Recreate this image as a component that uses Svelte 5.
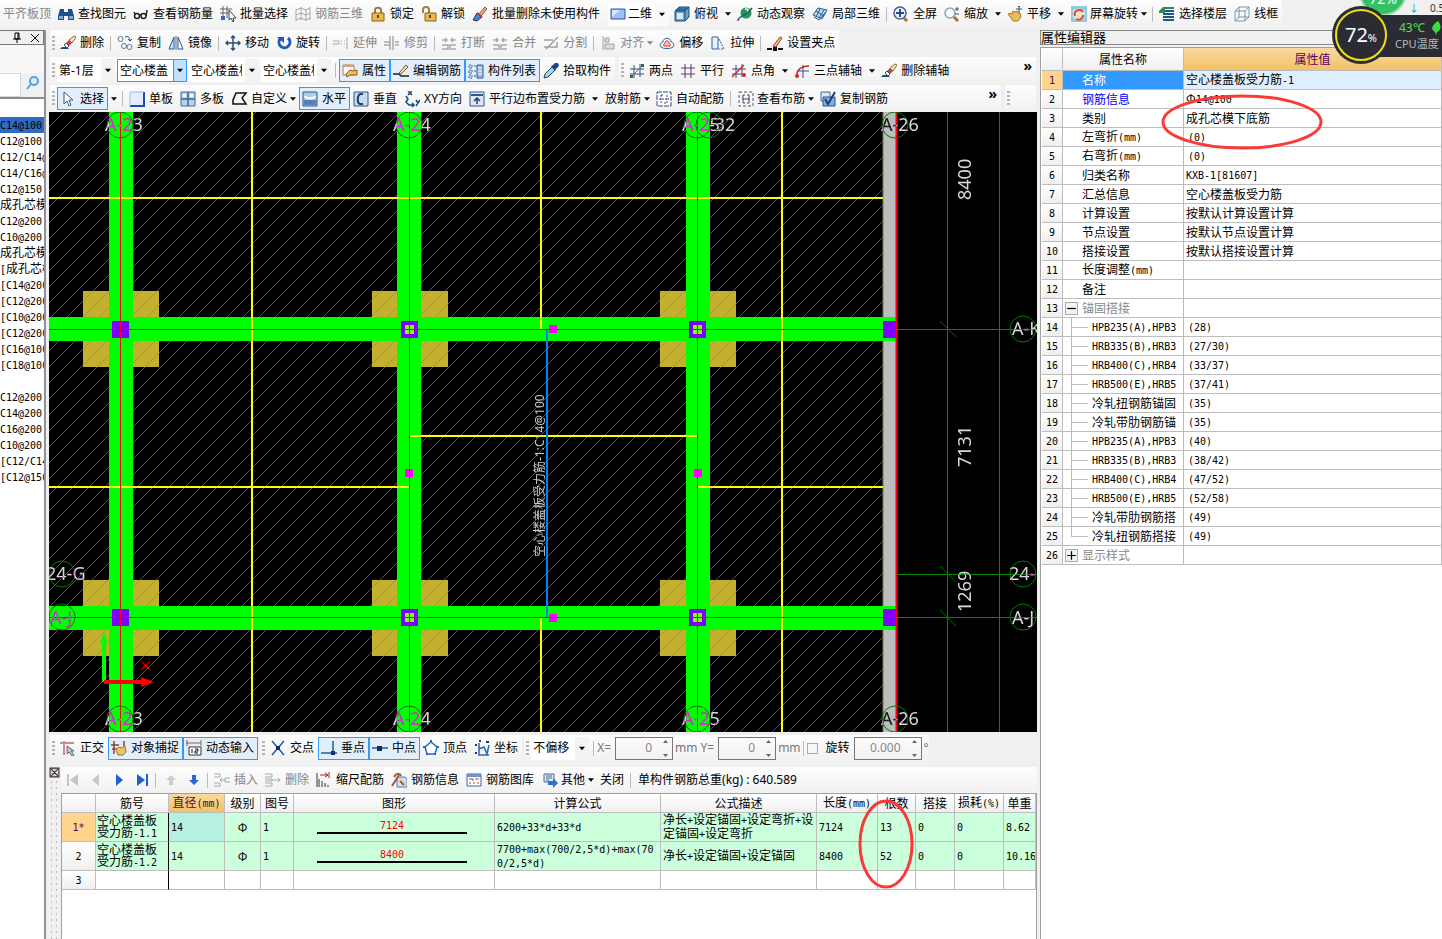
<script lang="ts">
	type Item = {
		icon?: string;
		text?: string;
		on?: boolean;
		off?: boolean;
		drop?: 'split' | 'menu';
		sep?: boolean;
		label?: string;
	};

	const SEP: Item = { sep: true };

	const editBar: Item[] = [
		{ icon: 'eraser', text: '删除' },
		SEP,
		{ icon: 'copy', text: '复制' },
		{ icon: 'mirror', text: '镜像' },
		SEP,
		{ icon: 'move', text: '移动' },
		{ icon: 'rotate', text: '旋转' },
		SEP,
		{ icon: 'extend', text: '延伸', off: true },
		{ icon: 'trim', text: '修剪', off: true },
		SEP,
		{ icon: 'break', text: '打断', off: true },
		{ icon: 'break', text: '合并', off: true },
		{ icon: 'split', text: '分割', off: true },
		SEP,
		{ icon: 'align', text: '对齐', off: true, drop: 'menu' },
		{ icon: 'offset', text: '偏移' },
		{ icon: 'stretch', text: '拉伸' },
		SEP,
		{ icon: 'grip', text: '设置夹点' }
	];

	const topLeft: Item[] = [
		{ text: '平齐板顶', off: true },
		{ icon: 'find', text: '查找图元' },
		{ icon: 'glasses', text: '查看钢筋量' },
		{ icon: 'batch', text: '批量选择' },
		{ icon: 'mesh', text: '钢筋三维', off: true },
		{ icon: 'lock', text: '锁定' },
		{ icon: 'unlock', text: '解锁' },
		{ icon: 'brush', text: '批量删除未使用构件' }
	];

	const topRight: Item[] = [
		{ icon: 'cube', text: '俯视', drop: 'split' },
		{ icon: 'orbit', text: '动态观察' },
		{ icon: 'local3d', text: '局部三维' },
		SEP,
		{ icon: 'full', text: '全屏' },
		{ icon: 'zoom', text: '缩放', drop: 'split' },
		{ icon: 'hand', text: '平移', drop: 'split' },
		{ icon: 'screen', text: '屏幕旋转', drop: 'menu' },
		SEP,
		{ icon: 'floors', text: '选择楼层' },
		{ icon: 'wire', text: '线框' }
	];

	const combos = [
		{ label: '楼层', value: '第-1层', kind: 'floor' },
		{ label: '构件类别', value: '空心楼盖', kind: 'active' },
		{ label: '构件类型', value: '空心楼盖板', kind: '' },
		{ label: '构件名称', value: '空心楼盖板', kind: '' }
	];

	const memberBar: Item[] = [
		SEP,
		{ icon: 'props', text: '属性', on: true },
		{ icon: 'pencil', text: '编辑钢筋', on: true },
		{ icon: 'list', text: '构件列表', on: true },
		{ icon: 'dropper', text: '拾取构件' }
	];

	const axisBar: Item[] = [
		{ icon: 'twopt', text: '两点' },
		{ icon: 'parallel', text: '平行' },
		{ icon: 'angle', text: '点角', drop: 'split' },
		{ icon: 'threept', text: '三点辅轴', drop: 'split' },
		{ icon: 'eraser', text: '删除辅轴' }
	];

	const drawBar: Item[] = [
		{ icon: 'cursor', text: '选择', on: true, drop: 'split' },
		SEP,
		{ icon: 'single', text: '单板' },
		{ icon: 'multi', text: '多板' },
		{ icon: 'custom', text: '自定义', drop: 'menu' },
		{ icon: 'horiz', text: '水平', on: true },
		{ icon: 'vert', text: '垂直' },
		{ icon: 'xy', text: 'XY方向' },
		{ icon: 'edge', text: '平行边布置受力筋', drop: 'split' },
		{ text: '放射筋', drop: 'menu' },
		{ icon: 'auto', text: '自动配筋' },
		SEP,
		{ icon: 'viewbar', text: '查看布筋', drop: 'menu' },
		{ icon: 'copybar', text: '复制钢筋' }
	];

	const snapLeft: Item[] = [
		{ icon: 'ortho', text: '正交' },
		{ icon: 'snap', text: '对象捕捉', on: true },
		{ icon: 'dyn', text: '动态输入', on: true }
	];

	const snapRight: Item[] = [
		{ icon: 'cross', text: '交点' },
		{ icon: 'perp', text: '垂点', on: true },
		{ icon: 'mid', text: '中点', on: true },
		{ icon: 'penta', text: '顶点' },
		{ icon: 'coord', text: '坐标' }
	];

	const rebarBar: Item[] = [
		{ icon: 'first', label: '首条', off: true },
		{ icon: 'prev', label: '上一条', off: true },
		{ icon: 'next', label: '下一条' },
		{ icon: 'last', label: '末条' },
		SEP,
		{ icon: 'up', label: '上移', off: true },
		{ icon: 'down', label: '下移' },
		SEP,
		{ icon: 'insert', text: '插入', off: true },
		{ icon: 'remove', text: '删除', off: true },
		{ icon: 'scale', text: '缩尺配筋' },
		{ icon: 'info', text: '钢筋信息' },
		{ icon: 'library', text: '钢筋图库' },
		{ icon: 'other', text: '其他', drop: 'menu' },
		{ text: '关闭' },
		SEP
	];

	const members = [
		'C14@100', 'C12@100', 'C12/C14@', 'C14/C16@', 'C12@150', '成孔芯模', 'C12@200', 'C10@200', '成孔芯模',
		'[成孔芯模', '[C14@200', '[C12@200', '[C10@200', '[C12@200', '[C16@100', '[C18@100', '', 'C12@200]',
		'C14@200]', 'C16@200]', 'C10@200]', '[C12/C14', '[C12@150'
	];

	const props: { name: string; value?: string; kind?: string }[] = [
		{ name: '名称', value: '空心楼盖板受力筋-1', kind: 'selected' },
		{ name: '钢筋信息', value: 'Φ14@100', kind: 'blue' },
		{ name: '类别', value: '成孔芯模下底筋' },
		{ name: '左弯折(mm)', value: '(0)' },
		{ name: '右弯折(mm)', value: '(0)' },
		{ name: '归类名称', value: 'KXB-1[81607]' },
		{ name: '汇总信息', value: '空心楼盖板受力筋' },
		{ name: '计算设置', value: '按默认计算设置计算' },
		{ name: '节点设置', value: '按默认节点设置计算' },
		{ name: '搭接设置', value: '按默认搭接设置计算' },
		{ name: '长度调整(mm)' },
		{ name: '备注' },
		{ name: '锚固搭接', kind: 'open' },
		{ name: 'HPB235(A),HPB3', value: '(28)', kind: 'leaf' },
		{ name: 'HRB335(B),HRB3', value: '(27/30)', kind: 'leaf' },
		{ name: 'HRB400(C),HRB4', value: '(33/37)', kind: 'leaf' },
		{ name: 'HRB500(E),HRB5', value: '(37/41)', kind: 'leaf' },
		{ name: '冷轧扭钢筋锚固', value: '(35)', kind: 'leaf' },
		{ name: '冷轧带肋钢筋锚', value: '(35)', kind: 'leaf' },
		{ name: 'HPB235(A),HPB3', value: '(40)', kind: 'leaf' },
		{ name: 'HRB335(B),HRB3', value: '(38/42)', kind: 'leaf' },
		{ name: 'HRB400(C),HRB4', value: '(47/52)', kind: 'leaf' },
		{ name: 'HRB500(E),HRB5', value: '(52/58)', kind: 'leaf' },
		{ name: '冷轧带肋钢筋搭', value: '(49)', kind: 'leaf' },
		{ name: '冷轧扭钢筋搭接', value: '(49)', kind: 'leaf last' },
		{ name: '显示样式', kind: 'closed' }
	];

	const rebarCols = ['筋号', '直径(mm)', '级别', '图号', '图形', '计算公式', '公式描述', '长度(mm)', '根数', '搭接', '损耗(%)', '单重'];

	const rebars = [
		{
			no: '1*', name: '空心楼盖板受力筋-1.1', shape: '7124', formula: '6200+33*d+33*d',
			desc: '净长+设定锚固+设定弯折+设定锚固+设定弯折', count: '13', weight: '8.62'
		},
		{
			no: '2', name: '空心楼盖板受力筋-1.2', shape: '8400', formula: '7700+max(700/2,5*d)+max(700/2,5*d)',
			desc: '净长+设定锚固+设定锚固', count: '52', weight: '10.16'
		}
	];

	// drawing geometry
	const capsX = [83, 372, 660];
	const capsY = [291, 580];
	const beamsX = [109, 397, 686];
	const beamsY = [317, 606];
	const bubbles = [
		[120, 125], [120, 719], [409, 125], [409, 719], [697, 125], [697, 719], [709, 125], [895, 125], [895, 719],
		[62, 574], [62, 617], [1023, 329], [1023, 574], [1023, 617]
	];
	const labels: [number, number, string][] = [
		[105, 131, 'A-23'], [105, 725, 'A-23'], [393, 131, 'A-24'], [393, 725, 'A-24'], [682, 131, 'A-25'],
		[709, 131, '-32'], [682, 725, 'A-25'], [881, 131, 'A-26'], [881, 725, 'A-26'], [46, 580, '24-G'],
		[50, 624, 'A-J'], [1012, 335, 'A-K'], [1009, 580, '24-H'], [1012, 624, 'A-J']
	];
	const dims: [number, string][] = [[200, '8400'], [467, '7131'], [612, '1269']];
	const grips = [[553, 329], [553, 618], [409, 473], [698, 473]];

	const icons: Record<string, string> = {
		eraser: '<path d="M0 14h9l-2-2H2z" fill="#1c4a7c"/><path d="M5 9l4-4 3 3-4 4z" fill="#c8413a"/><path d="M9 5l5-4 2 1-4 6z" fill="#f2e6c8" stroke="#8a6a30"/><path d="M4 10l2-2 3 3-2 2z" fill="#fff" stroke="#356"/>',
		copy: '<g fill="none" stroke="#5a7894"><circle cx="3.500" cy="4" r="2.500"/><circle cx="7" cy="11" r="2.500"/><circle cx="12.500" cy="12" r="2.500"/><path d="M8 2c3-1 5 0 5 4m-2-2 2 2 2-2" stroke="#234b9a"/></g>',
		mirror: '<path d="M6 2v12H1z" fill="#cfe0f4" stroke="#2b5797"/><path d="M8 1v14" stroke="#567"/><path d="M10 2v12h5z" fill="#fff" stroke="#2b5797"/>',
		move: '<path d="M8 1v14M1 8h14M6 3l2-2 2 2M6 13l2 2 2-2M3 6 1 8l2 2M13 6l2 2-2 2" fill="none" stroke="#2b4f77" stroke-width="1.500"/>',
		rotate: '<path d="M4 4a5.500 5.500 0 1 0 8-1" fill="none" stroke="#2456b8" stroke-width="3"/><path d="M1 2h7v6z" fill="#2456b8"/>',
		extend: '<path d="M0 6h6v3H0M8 6h1m-1 3h1m2-3h1m-1 3h1M14 2v12" fill="none" stroke="#a8a8a8"/>',
		trim: '<path d="M6 1v14M9 1v14M0 7h6M0 10h6M11 7h4M11 10h4" fill="none" stroke="#a8a8a8" stroke-width="1.500"/>',
		break: '<path d="M1 10h6v4H1M15 10H9v4h6M1 5h5M4 3l2 2-2 2M15 5h-5m2-2-2 2 2 2" fill="none" stroke="#aaa" stroke-width="1.500"/>',
		split: '<path d="M1 5h9M1 12h13V7M3 14 15 2" fill="none" stroke="#a0a0a0" stroke-width="1.500"/>',
		align: '<path d="M2 1v14M4 3h4v4H4zM4 9h9v5H4z" fill="#ddd" stroke="#a0a0a0"/>',
		offset: '<path d="M2 12c-2-2 0-5 2-5 0-5 8-5 8 0 2 0 4 3 2 5-2 2-10 2-12 0z" fill="none" stroke="#2d5f94"/><path d="M5 11c-1-1 0-2 1-3 0-3 4-3 4 0 1 1 2 2 1 3z" fill="#fbb" stroke="#d33"/>',
		stretch: '<path d="M2 2h6v12H2z" fill="#eaf3fb" stroke="#2b5f9b"/><path d="M9 4l5 10H9" fill="none" stroke="#2b5f9b" stroke-dasharray="2 1"/>',
		grip: '<path d="M0 14h5M11 14h5" stroke="#111" stroke-width="2"/><path d="M6 12h4v4H6z" fill="#111"/><path d="M6 11 13 2l2 1-6 9z" fill="#e9c46a" stroke="#a33"/>',
		find: '<path d="M2 3h4v3h4V3h4l2 7v4h-6v-4H6v4H0v-4z" fill="#1f4e8c"/><path d="M1 10h4v3H1zM11 10h4v3h-4z" fill="#7fa8dc"/>',
		glasses: '<g fill="none" stroke="#222" stroke-width="1.500"><circle cx="4" cy="10" r="2.500"/><circle cx="10.500" cy="10" r="2.500"/><path d="M13 10l1-6M6 9h2M2 8l-1-2"/></g>',
		batch: '<path d="M3 0v12M7 0v12M0 3h12M0 7h12" stroke="#666"/><path d="M1 10h4v4H1z" fill="#36b"/><path d="M9 4v10l2-2 2 4 1-1-1-3h3z" fill="#fff" stroke="#345"/>',
		mesh: '<path d="M1 3v12M6 1v13M11 3v12M15 1v13M1 4l5-2 5 2 4-2M1 9l5-2 5 2 4-2M1 14l5-2 5 2 4-2" fill="none" stroke="#a8a8a8"/>',
		lock: '<path d="M5 7V4c0-3 6-3 6 0v3" fill="none" stroke="#998040" stroke-width="2"/><path d="M2 7h12v8H2z" fill="#e9b949" stroke="#8a6414"/><path d="M8 9v3" stroke="#543" stroke-width="2"/>',
		unlock: '<path d="M2 7V4c0-4 6-4 6 0v3" fill="none" stroke="#998040" stroke-width="2"/><path d="M4 7h11v8H4z" fill="#e9b949" stroke="#8a6414"/><path d="M9 9v3" stroke="#543" stroke-width="2"/>',
		brush: '<path d="M7 8l6-7 2 2-6 7z" fill="#d9b27c" stroke="#a0522d"/><path d="M1 14l4-7 5 4-5 4z" fill="#3d86d6" stroke="#235"/><path d="M5 7l5 4" stroke="#c33" stroke-width="2"/>',
		plane: '<path d="M1 3h14v10H1z" fill="#9dc0f7" stroke="#2a4fa8"/><path d="M2 4h8l-8 7z" fill="#d5e4ff"/>',
		cube: '<path d="M1 5l4-4h10v10l-4 4H1z" fill="#6fa3c8" stroke="#1d4a74"/><path d="M1 5l4-4h10l-4 4z" fill="#2b6fa5"/><path d="M1 5h10v10M11 5l4-4" fill="none" stroke="#1d4a74"/><path d="M3 7h6v6H3z" fill="#d7e9f5"/>',
		orbit: '<circle cx="9" cy="7" r="5.500" fill="#1f9a55"/><path d="M8 3c4 0 4 3 2 4" stroke="#bff0cf" stroke-width="2" fill="none"/><path d="M1 15C1 9 8 12 15 2" fill="none" stroke="#357" stroke-width="1.500"/>',
		local3d: '<path d="M1 9l5-7 9 2-5 9z" fill="#bcd9ee" stroke="#205d94"/><path d="M4 5l8 5M8 3l-4 8M12 4l-5 8M2 11l5 3 7-8" fill="none" stroke="#205d94"/>',
		full: '<circle cx="7" cy="7" r="6" fill="#eaf3fb" stroke="#46648c" stroke-width="1.500"/><path d="M7 3v8M3 7h8" stroke="#1d4ea0" stroke-width="2"/><path d="M11 12l3 3" stroke="#a8742c" stroke-width="3"/>',
		zoom: '<circle cx="6" cy="7" r="5" fill="#f5fbff" stroke="#8aa3b8" stroke-width="1.500"/><path d="M10 11l4 4" stroke="#a8742c" stroke-width="3"/><path d="M13 1v4M11 3h4M11 8h4" stroke="#357"/>',
		hand: '<path d="M1 8l3-1 1 1 1-3 2 1 2-1 1 2 2 0 1 4-3 4H6l-2-3z" fill="#e8bd5c" stroke="#a77c22"/><path d="M12 0v7M9 3h6M11 1l1-1 1 1" stroke="#357" fill="none"/>',
		screen: '<path d="M0 0h16v16H0z" fill="#8fcbe6"/><path d="M2 4l6-2 6 3-1 8-7 2-4-4z" fill="#f4e6c0"/><path d="M4 10a4.500 4.500 0 0 1 8-4m0 3a4.500 4.500 0 0 1-7 4" fill="none" stroke="#e1443a" stroke-width="2"/>',
		floors: '<path d="M4 5h11M4 8h11M4 11h11M4 14h11" fill="none" stroke="#1c5a86" stroke-width="2"/><path d="M0 5l4-4h11v2H6v4H0z" fill="#2b8a5b"/>',
		wire: '<path d="M1 5h10v10H1zM5 1h10v10H5zM1 5l4-4M11 5l4-4M11 15l4-4M1 15l4-4" fill="none" stroke="#7796b0"/>',
		props: '<path d="M1 2h11v10H1z" fill="#fff" stroke="#a77"/><path d="M1 2h11v2H1z" fill="#e8a34c"/><path d="M4 11l4-4 3 1 4-1v5H8l-3 2z" fill="#edbf55" stroke="#8a5a10"/>',
		pencil: '<path d="M0 11h6l2 2h8" stroke="#222" fill="none" stroke-width="1.500"/><path d="M6 10 13 2l2 2-7 7z" fill="#efe0b5" stroke="#7a5a20"/>',
		list: '<path d="M1 2h3v3H1zM1 7h3v3H1zM1 12h3v3H1zM6 3h2M6 8h2M6 13h2" fill="none" stroke="#345a9c" stroke-dasharray="2 1"/><path d="M9 2h6v13H9z" fill="#9fb6d6" stroke="#345a9c"/><path d="M10 5h4M10 8h4M10 11h4" stroke="#fff"/>',
		dropper: '<path d="M1 15l1-4 7-7 3 3-7 7z" fill="#a8d5f0" stroke="#245"/><path d="M8 3l2-1 2-2c3-1 5 2 3 4l-2 2-1 2z" fill="#1c4587"/>',
		twopt: '<path d="M5 2v13M11 1v13M1 6h14M1 11h14" stroke="#334f8a"/><path d="M2 14 14 2" stroke="#2a2"/><path d="M1 12h3v3H1zM12 1h3v3h-3z" fill="#2d6e2d"/>',
		parallel: '<path d="M5 1v14M11 1v14" stroke="#28448c"/><path d="M1 5h14M1 11h14" stroke="#8a3048"/>',
		angle: '<path d="M5 2v13M11 1v13M1 6h14M1 11h10" stroke="#334f8a"/><path d="M1 14 13 2" stroke="#d22" stroke-width="1.500"/><circle cx="13" cy="12" r="2" fill="#d22"/>',
		threept: '<path d="M3 14C2 7 7 3 15 3" fill="none" stroke="#d22" stroke-width="1.500"/><path d="M9 2v13M3 8h12" stroke="#334f8a"/><circle cx="3" cy="13" r="2" fill="#d22"/>',
		cursor: '<path d="M4 1v12l3-3 2 5 2-1-2-5h4z" fill="#fff" stroke="#3c5a80"/>',
		single: '<path d="M1 1h14v14H1z" fill="#e4edff"/><path d="M15 1v14H1" stroke="#1d4ab5" stroke-width="2" fill="none"/><path d="M1 15V1h14" fill="none" stroke="#9db7ea"/>',
		multi: '<path d="M1 1h14v14H1z" fill="#bcd2e8" stroke="#3a6894"/><path d="M8 1v14M1 8h14" stroke="#3a6894" stroke-width="1.500"/><path d="M3 3h3v3H3zM10 3h3v3h-3z" fill="#fff"/>',
		custom: '<path d="M4 2h10l-4 5 4 6H1V9z" fill="none" stroke="#111" stroke-width="1.500"/>',
		horiz: '<path d="M1 1h14v14H1z" fill="#b5cce8" stroke="#2c5690"/><path d="M2 9h12v5H2z" fill="#5580b8"/><path d="M3 5c1 3 9 3 10 0" fill="none" stroke="#fff" stroke-width="2"/>',
		vert: '<path d="M1 1h14v14H1z" fill="#c9dbef" stroke="#2c5690"/><path d="M10 3H7C4 5 4 12 7 13h3" fill="none" stroke="#1c3f74" stroke-width="2"/>',
		xy: '<path d="M4 0l4 4M8 0 4 4M2 5l2 3-2 3 3 3 5 0M8 12l2 2-2 2M12 9l2 3M16 9l-4 6" fill="none" stroke="#1d4a7a" stroke-width="1.500"/>',
		edge: '<path d="M1 1h14v14H1z" fill="#dde8f4" stroke="#34588c"/><path d="M2 4h12" stroke="#34588c" stroke-width="2"/><path d="M8 13V7M5 10l3-3 3 3" fill="none" stroke="#1d3f7a" stroke-width="1.500"/>',
		auto: '<path d="M1 1h14v14H1z" fill="#fff" stroke="#2b4a8c" stroke-dasharray="5 1"/><path d="M5 4v8M11 4v8M3 8h10M5 4h3M8 12h3" fill="none" stroke="#447" stroke-dasharray="2 1"/>',
		viewbar: '<path d="M1 1h14v14H1z" fill="none" stroke="#557" stroke-dasharray="3 2"/><path d="M7 4H5v8h2M9 4h2v8H9M4 8h8" fill="none" stroke="#446"/>',
		copybar: '<path d="M1 1h9v9H1z" fill="#dce8f5" stroke="#3a6894"/><path d="M3 6h12v9H3z" fill="#84acdc" stroke="#2a5488"/><path d="M5 8l3 5 7-12" fill="none" stroke="#153e72" stroke-width="2"/>',
		ortho: '<path d="M0 3h14M4 1v14" stroke="#c78e8e" stroke-width="2"/><path d="M7 6v8l2-2 3 4 2-1-3-4h3z" fill="#b8c6d6" stroke="#667"/>',
		snap: '<path d="M3 1v13M0 5h8M1 9h5M13 1v5" stroke="#8a4040" stroke-width="1.500"/><path d="M5 9l3-2 2 1 4-2 1 6-3 3H7z" fill="#edc565" stroke="#9a7428"/>',
		dyn: '<path d="M0 3h15M1 0v6M15 0v6" stroke="#a55"/><path d="M3 7h12v8H3z" fill="#fff" stroke="#333"/><path d="M6 9v4M9 9h3v2H9v2h3" stroke="#111" fill="none"/>',
		cross: '<path d="M2 1l12 14M14 1 2 15" stroke="#1a5ca8" stroke-width="1.500"/><path d="M6 6h4v4H6z" fill="#0f2f66"/>',
		perp: '<path d="M12 1v12M0 13h16" stroke="#1a5ca8" stroke-width="1.500"/><path d="M10 11h4v4h-4z" fill="#0f2f66"/>',
		mid: '<path d="M0 8h16" stroke="#1a5ca8" stroke-width="1.500"/><path d="M5 6h5v5H5z" fill="#0f2f66"/>',
		penta: '<path d="M8 2l6 5-2 7H4L2 7z" fill="#fff" stroke="#2767b5" stroke-width="1.500"/><path d="M7 0h2v3H7zM0 6h3v2H0zM13 6h3v2h-3zM3 13h2v2H3zM11 13h2v2h-2z" fill="#2767b5"/>',
		coord: '<path d="M5 3v12h10M5 9l5-2 3 7 2-9" fill="none" stroke="#2767b5" stroke-width="1.500"/><path d="M1 4h2v2H1zM1 12h2v2H1zM5 0h2v2H5zM12 1h3v2h-3z" fill="#335"/>',
		first: '<path d="M3 2v12" stroke="#c4c4c4" stroke-width="2"/><path d="M13 2v12L5 8z" fill="#c4c4c4"/>',
		prev: '<path d="M11 2v12L4 8z" fill="#c8c8c8"/>',
		next: '<path d="M5 2v12l7-6z" fill="#1f5fd0"/>',
		last: '<path d="M13 2v12" stroke="#1f5fd0" stroke-width="2"/><path d="M3 2v12l8-6z" fill="#1f5fd0"/>',
		up: '<path d="M8 3l5 5h-3v5H6V8H3z" fill="#ccc"/>',
		down: '<path d="M8 13l5-5h-3V3H6v5H3z" fill="#2a66d4"/>',
		insert: '<path d="M0 2h6v3H0M0 11h6v3H0M16 6h-5v4h5M11 8H6m2-2-2 2 2 2" fill="none" stroke="#aaa"/>',
		remove: '<path d="M0 2h7v3H0M0 11h7v3H0M0 7h7v2H0M7 8h8m-2-2 2 2-2 2" fill="none" stroke="#aaa"/>',
		scale: '<path d="M1 1v14M3 7v8M6 9v6M9 11v4M12 13v2" stroke="#333"/><path d="M4 3h8m-3-2 3 2-3 2M13 0v6" fill="none" stroke="#a22"/>',
		info: '<path d="M6 5h8l2 2v8H6z" fill="#cfe0f2" stroke="#5a7ca4"/><path d="M1 14 8 3" stroke="#b44" stroke-width="2"/><path d="M3 5c2-4 6-4 7-1M9 9l4 4" fill="none" stroke="#8a6a30" stroke-width="2"/>',
		library: '<path d="M1 2h14v12H1z" fill="#fff" stroke="#42689c"/><path d="M1 2h14v3H1z" fill="#6d95c8"/><path d="M3 7h4v2M9 7h4M3 11h2M7 11h2M11 11h2" stroke="#a44" fill="none"/>',
		other: '<path d="M2 2h10v8H2z" fill="#dce8f5" stroke="#4a6a94"/><path d="M4 4h6M4 6h6M4 8h3" stroke="#4a6a94"/><path d="M6 9h5V6l5 5-5 5v-3H6z" fill="#2f6fd0"/>'
	};

	// half-width characters are set in the fixed-pitch face, the rest in the CJK one
	function runs(text: string) {
		return text.match(/[\x20-\x7e]+|[^\x20-\x7e]+/g) ?? [];
	}
</script>

{#snippet icon(name: string)}
	<svg class="icon" viewBox="0 0 16 16" aria-hidden="true">{@html icons[name]}</svg>
{/snippet}

{#snippet arrow()}
	<svg class="arrow" viewBox="0 0 7 4" aria-hidden="true"><path d="M0 0h7L3.500 4z" /></svg>
{/snippet}

{#snippet items(list: Item[])}
	{#each list as it}
		{#if it.sep}
			<span class="sep"></span>
		{:else}
			<button
				class="tool"
				class:on={it.on}
				class:bare={!it.text}
				class:menu={it.drop === 'menu'}
				disabled={it.off}
				aria-label={it.label}
			>
				{#if it.icon}{@render icon(it.icon)}{/if}
				{#if it.text}<span>{it.text}</span>{/if}
				{#if it.drop === 'menu'}{@render arrow()}{/if}
			</button>
			{#if it.drop === 'split'}
				<button class="split" aria-label="{it.text}选项">{@render arrow()}</button>
			{/if}
		{/if}
	{/each}
{/snippet}

{#snippet mixed(text: string)}
	{#each runs(text) as run}{#if run.charCodeAt(0) < 127}<span class="half">{run}</span>{:else}{run}{/if}{/each}
{/snippet}

{#snippet spin(label: string, value: string)}
	<span class="spin" class:wide={value.length > 1}>
		<input type="text" aria-label={label} {value} disabled />
		<svg viewBox="0 0 5 17" aria-hidden="true"><path d="M0 3h5L2.500 0zM0 14h5l-2.500 3z" /></svg>
	</span>
{/snippet}

<div class="app">
	<header class="topbar">
		<div class="group first">{@render items(topLeft)}</div>
		<div class="group rest">
			<label class="combo view">
				{@render icon('plane')}
				<select aria-label="视图"><option>二维</option></select>
				{@render arrow()}
			</label>
			{@render items(topRight)}
		</div>
	</header>

	<div class="body">
		<aside class="members">
			<div class="dock-title">
				<svg viewBox="0 0 32 12" aria-hidden="true">
					<path d="M4 1h4v6H4zM2 7h8M6 7v4M7 1v6" />
					<path d="M20 2l8 8M28 2l-8 8" />
				</svg>
			</div>
			<div class="blank"></div>
			<div class="search">
				<input type="text" aria-label="搜索构件" />
				<button aria-label="搜索">
					<svg viewBox="0 0 14 14"><circle cx="8" cy="5" r="4" /><path d="M5 8l-4 5" /></svg>
				</button>
			</div>
			<ul>
				{#each members as m, i}
					<li class:current={i === 0}>{@render mixed(m)}</li>
				{/each}
			</ul>
		</aside>

		<main>
			<div class="bar edit">
				<div class="group">
					<span class="grip"></span>
					{@render items(editBar)}
				</div>
			</div>
			<div class="bar">
				<div class="group">
					<span class="grip"></span>
					{#each combos as c}
						<label class="combo {c.kind}">
							<select aria-label={c.label}><option>{c.value}</option></select>
							{@render arrow()}
						</label>
					{/each}
					{@render items(memberBar)}
				</div>
				<div class="group fill">
					<span class="grip"></span>
					{@render items(axisBar)}
					<button class="more" aria-label="更多">»</button>
				</div>
			</div>
			<div class="bar">
				<div class="group fill">
					<span class="grip"></span>
					{@render items(drawBar)}
					<button class="more" aria-label="更多">»</button>
				</div>
				<div class="group stub"><span class="grip"></span></div>
			</div>

			<svg class="canvas" viewBox="49 112 988 620" role="img" aria-label="平面图">
				<defs>
					<pattern id="hatch" width="16" height="16" patternUnits="userSpaceOnUse">
						<path d="M-1 1 1-1M0 16 16 0M15 17 17 15" stroke="#8c8c5a" stroke-opacity=".6" />
					</pattern>
				</defs>
				<rect x="49" y="112" width="988" height="620" fill="#000" />
				{#each capsX as x}
					{#each capsY as y}
						<rect {x} {y} width="76" height="76" fill="#c4b030" />
					{/each}
				{/each}
				<rect x="49" y="112" width="834" height="620" fill="url(#hatch)" />
				<rect x="883" y="112" width="13" height="620" fill="#bdbdbd" />
				<path d="M883 112v620" stroke="#77774a" />
				{#each beamsX as x}
					<rect {x} y="112" width="24" height="620" fill="#0f0" />
				{/each}
				{#each beamsY as y}
					<rect x="49" {y} width="848" height="24" fill="#0f0" />
				{/each}
				<path
					class="yellow"
					d="M49 198H883M252 112V732M541 112V329M541 618V732M782 112V732M49 487H409M697 487H883M409 436H697"
				/>
				{#each [321, 609] as y}
					<rect x="112" {y} width="17" height="17" fill="#8000ff" />
					<rect x="883" {y} width="13" height="17" fill="#8000ff" />
					{#each [401, 689] as x}
						<rect {x} {y} width="17" height="17" fill="#8000ff" />
						<rect x={x + 4} y={y + 4} width="9" height="9" fill="#80ff00" />
					{/each}
				{/each}
				{#each grips as [x, y]}
					<rect x={x - 4} y={y - 4} width="8" height="8" fill="#f0f" />
				{/each}
				<path class="thin" stroke="#a61c1c" d="M49 329.500H897M49 617.500H897M409.500 112V732M697.500 112V732" />
				<path class="thin" stroke="#f00" d="M120.500 112V732" />
				<path stroke="#f00" stroke-width="2" d="M896.500 112V732" />
				<path class="thin" stroke="#008c00" d="M947.500 112V732M999.500 112V732M897 329.500H1037M897 574.500H1037M897 617.500H1037" />
				<path stroke="#006800" d="M940 321l16 16M940 566l16 16M940 610l16 16" />
				<path stroke="#0080ff" stroke-width="2" d="M547 330V617" />
				{#each bubbles as [cx, cy]}
					<circle {cx} {cy} r="13" fill="none" stroke="#007a00" />
				{/each}
				{#each labels as [x, y, text]}
					<text class="axis" {x} {y}>{text}</text>
				{/each}
				{#each dims as [y, text]}
					<text class="axis" transform="translate(971 {y}) rotate(-90)">{text}</text>
				{/each}
				<text class="note" transform="translate(544 557) rotate(-90)">空心楼盖板受力筋-1:C14@100</text>
				<path stroke="#0f0" stroke-width="4" d="M104 682V642" />
				<path fill="#0f0" d="M100 643h8l-4-11z" />
				<path stroke="#f00" stroke-width="4" d="M104 682H143" />
				<path fill="#f00" d="M141 677v10l13-5z" />
				<path stroke="#f00" d="M141 661l9 9M150 661l-9 9" />
			</svg>

			<div class="bar snapbar">
				<div class="group"><span class="grip"></span>{@render items(snapLeft)}</div>
				<div class="group"><span class="grip"></span>{@render items(snapRight)}</div>
				<div class="group">
					<span class="grip"></span>
					<label class="combo floor">
						<select aria-label="偏移方式"><option>不偏移</option></select>
						{@render arrow()}
					</label>
					<span class="sep"></span>
					<span class="dim">X=</span>
					{@render spin('X', '0')}
					<span class="dim unit">mm</span>
					<span class="dim">Y=</span>
					{@render spin('Y', '0')}
					<span class="dim">mm</span>
					<span class="sep"></span>
					<label class="check"><input type="checkbox" disabled />旋转</label>
					{@render spin('旋转角度', '0.000')}
					<span class="dim">°</span>
				</div>
			</div>

			<section class="rebar">
				<div class="dock-strip">
					<button aria-label="关闭面板">
						<svg viewBox="0 0 10 10"><path d="M1 1h8v8H1zM2 2l6 6M8 2 2 8" /></svg>
					</button>
				</div>
				<div class="rebar-main">
					<div class="group rebar-tools">
						{@render items(rebarBar)}
						<span class="total">单构件钢筋总重(kg) : 640.589</span>
					</div>
					<div class="sheet">
						<table>
							<colgroup>
								<col class="c34" /><col class="c73" /><col class="c56" /><col class="c36" /><col class="c33" />
								<col class="c201" /><col class="c166" /><col class="c156" /><col class="c61" /><col class="c38" />
								<col class="c39" /><col class="c49" /><col />
							</colgroup>
							<thead>
								<tr>
									<th></th>
									{#each rebarCols as c, i}
										<th class:hot={i === 1}>{@render mixed(c)}</th>
									{/each}
								</tr>
							</thead>
							<tbody>
								{#each rebars as r, i}
									<tr class="data">
										<th class:hot={i === 0}>{@render mixed(r.no)}</th>
										<td class="name">{@render mixed(r.name)}</td>
										<td class:cell={i === 0}>{@render mixed('14')}</td>
										<td class="grade">Φ</td>
										<td>{@render mixed('1')}</td>
										<td class="shape"><span class="half">{r.shape}</span></td>
										<td>{@render mixed(r.formula)}</td>
										<td>{@render mixed(r.desc)}</td>
										<td>{@render mixed(r.shape)}</td>
										<td>{@render mixed(r.count)}</td>
										<td>{@render mixed('0')}</td>
										<td>{@render mixed('0')}</td>
										<td class="weight">{@render mixed(r.weight)}</td>
									</tr>
								{/each}
								<tr>
									<th>{@render mixed('3')}</th>
									<td class="name"></td>
									{#each { length: 11 } as _}<td></td>{/each}
								</tr>
							</tbody>
						</table>
					</div>
				</div>
				<svg class="mark count" viewBox="0 0 56 92" aria-hidden="true"><ellipse cx="28" cy="46" rx="26" ry="43" /></svg>
			</section>
		</main>

		<aside class="inspector">
			<h2>属性编辑器</h2>
			<div class="props">
				<table>
					<colgroup><col class="c21" /><col class="c121" /><col /></colgroup>
					<thead>
						<tr><th></th><th>属性名称</th><th class="hot">属性值</th></tr>
					</thead>
					<tbody>
						{#each props as p, i}
							<tr class={p.kind}>
								<th>{@render mixed(String(i + 1))}</th>
								<td class="key">
									{#if p.kind === 'open' || p.kind === 'closed'}
										<button class="fold" aria-label="展开 {p.name}">
											<svg viewBox="0 0 9 9"><path d={p.kind === 'open' ? 'M1 4.500h7' : 'M1 4.500h7M4.500 1v7'} /></svg>
										</button>
									{/if}
									{@render mixed(p.name)}
								</td>
								<td class="val" class:paren={p.value?.startsWith('(')}>{@render mixed(p.value ?? '')}</td>
							</tr>
						{/each}
					</tbody>
				</table>
			</div>
			<svg class="mark kind" viewBox="0 0 162 58" aria-hidden="true"><ellipse cx="81" cy="29" rx="79" ry="26" /></svg>
		</aside>
	</div>

	<div class="monitor">
		<div class="ball">72%</div>
		<div class="speed"><span>↓</span>0.5</div>
		<div class="temps">
			<div class="deg">
				43℃
				<svg viewBox="0 0 10 14"><path d="M7 0c4 5 3 9-1 11l-1 3-1-3C-1 8 1 4 7 0z" /></svg>
			</div>
			<div>CPU温度</div>
		</div>
		<div class="dial"><span>72</span><small>%</small></div>
	</div>
</div>

<style>
	:global(body) {
		background: #f0f0f0;
	}

	.app {
		position: relative;
		display: flex;
		flex-direction: column;
		min-height: 100vh;
		overflow: hidden;
		font-family: 'Noto Sans', 'Noto Sans CJK SC', sans-serif;
		font-size: 12px;
		line-height: 16px;
		color: #000;
	}

	button,
	input,
	select {
		font: inherit;
		color: inherit;
		margin: 0;
		padding: 0;
		border: 0;
		border-radius: 0;
		background: none;
		box-sizing: border-box;
	}

	.icon {
		width: 16px;
		height: 16px;
		flex: none;
	}

	.arrow {
		width: 6px;
		height: 4px;
		flex: none;
		fill: #000;
	}

	/* toolbars */
	.topbar {
		display: flex;
		height: 30px;
		box-sizing: border-box;
		padding-bottom: 2px;
	}

	.group {
		display: flex;
		align-items: center;
		flex: none;
		background: linear-gradient(#fdfdfd, #f1f1f1);
	}

	.group.fill {
		flex: 1;
		min-width: 0;
		overflow: hidden;
	}

	.group.first {
		width: 606px;
	}

	.group.rest {
		padding-left: 2px;
	}

	.bar {
		display: flex;
		gap: 4px;
		height: 28px;
		box-sizing: border-box;
		padding: 1px 1px 0;
	}

	.bar.edit {
		height: 26px;
		padding-top: 0;
	}

	.grip {
		width: 3px;
		height: 15px;
		margin: 0 2px;
		flex: none;
		background: repeating-linear-gradient(#b4b4b4 0 2px, transparent 2px 4px);
	}

	.tool {
		display: flex;
		align-items: center;
		gap: 4px;
		height: 23px;
		flex: none;
		padding: 0 4px 0 3px;
		white-space: nowrap;
	}

	.tool.menu {
		gap: 3px;
		padding-left: 4px;
		padding-right: 3px;
	}

	.tool.bare {
		padding: 0 3px 0 4px;
	}

	.tool:disabled {
		color: #858585;
	}

	.tool:disabled .arrow {
		fill: #858585;
	}

	.tool.on {
		background: #e2effb;
		box-shadow: inset 0 0 0 1px #3399ff;
	}

	.split {
		display: flex;
		align-items: center;
		justify-content: center;
		width: 12px;
		height: 23px;
		flex: none;
	}

	.sep {
		width: 1px;
		height: 15px;
		margin: 0 3px 0 2px;
		flex: none;
		background: #bcbcbc;
	}

	.more {
		margin-left: auto;
		padding: 0 4px 10px;
		font-weight: 700;
		font-size: 14px;
	}

	.stub {
		width: 31px;
	}

	.combo {
		position: relative;
		display: flex;
		align-items: center;
		width: 70px;
		height: 23px;
		margin-right: 2px;
		flex: none;
		box-sizing: border-box;
		background: #fff;
	}

	.combo select {
		appearance: none;
		width: 100%;
		height: 23px;
		padding: 0 17px 0 2px;
	}

	.combo .arrow {
		position: absolute;
		right: 0;
		top: 0;
		width: 6px;
		height: 23px;
		padding: 0 4px;
		background: #f3f3f3;
		pointer-events: none;
	}

	.combo.floor {
		width: 58px;
	}

	.combo.active {
		border: 1px solid #3399ff;
	}

	.combo.active select,
	.combo.active .arrow {
		height: 21px;
	}

	.combo.active .arrow {
		padding: 0 3px;
		background: #c2e0ff;
		border-left: 1px solid #3399ff;
	}

	.combo.view {
		width: 61px;
		padding-left: 2px;
	}

	.combo.view .arrow {
		background: #fafafa;
	}

	.body {
		display: flex;
		flex: 1;
	}

	/* member list */
	.members {
		display: flex;
		flex-direction: column;
		width: 46px;
		flex: none;
		box-sizing: border-box;
		border-right: 2px solid #90909c;
		overflow: hidden;
	}

	.dock-title {
		display: flex;
		justify-content: flex-end;
		align-items: center;
		height: 15px;
		box-sizing: border-box;
		border: 1px solid #777;
		border-left: 0;
	}

	.dock-title svg {
		width: 32px;
		height: 12px;
		fill: none;
		stroke: #000;
	}

	.blank {
		height: 28px;
		background: #f8f8f8;
	}

	.search {
		display: flex;
		height: 26px;
		box-sizing: border-box;
		border-bottom: 2px solid #8c8c8c;
	}

	.search input {
		width: 21px;
		background: #fff;
		border: 1px solid #d0d7e0;
		border-left: 0;
	}

	.search button {
		flex: 1;
	}

	.search svg {
		width: 14px;
		height: 14px;
		fill: #d9edfb;
		stroke: #4fa4e0;
		stroke-width: 2;
	}

	.members ul {
		flex: 1;
		margin: 0;
		padding: 18px 0 0;
		list-style: none;
		background: #fff;
	}

	.members li {
		height: 16px;
		line-height: 14px;
		white-space: nowrap;
		overflow: hidden;
		font-family: 'Noto Sans CJK SC', sans-serif;
	}

	.members .current {
		background: #316ac5;
	}

	.half {
		font-family: 'DejaVu Sans Mono', monospace;
		font-size: 10px;
	}

	main {
		display: flex;
		flex-direction: column;
		flex: 1;
		min-width: 0;
		padding: 0 3px;
	}

	/* drawing */
	.canvas {
		display: block;
		width: 100%;
		aspect-ratio: 988 / 620;
		isolation: isolate;
	}

	.yellow {
		fill: none;
		stroke: #ff0;
		stroke-width: 2;
	}

	.thin {
		fill: none;
		stroke-width: 1;
	}

	.axis {
		font-family: 'Noto Sans', sans-serif;
		font-size: 18px;
		fill: #d8d8d8;
		mix-blend-mode: difference;
	}

	.note {
		font-family: 'Noto Sans', 'Noto Sans CJK SC', sans-serif;
		font-size: 12px;
		fill: #ccc;
	}

	/* snapping bar */
	.snapbar {
		gap: 2px;
		height: 31px;
		padding: 3px 1px 2px;
	}

	.dim {
		color: #777;
	}

	.unit {
		margin-right: 3px;
	}

	.spin {
		display: flex;
		align-items: center;
		width: 58px;
		height: 23px;
		margin: 0 2px 0 4px;
		box-sizing: border-box;
		border: 1px solid #777;
	}

	.spin.wide {
		width: 68px;
	}

	.spin input {
		flex: 1;
		min-width: 0;
		padding-right: 11px;
		text-align: right;
		color: #888;
	}

	.spin svg {
		width: 5px;
		height: 17px;
		margin-right: 4px;
		fill: #666;
	}

	.check {
		display: flex;
		align-items: center;
		gap: 8px;
	}

	.check input {
		appearance: none;
		width: 11px;
		height: 11px;
		border: 1px solid #aaa;
		background: #f6f6f6;
	}

	/* rebar panel */
	.rebar {
		position: relative;
		display: flex;
		flex: 1;
		padding-top: 4px;
	}

	.dock-strip {
		width: 12px;
		flex: none;
		background: radial-gradient(circle, #bbb 1px, transparent 1px) 0 0 / 5px 6px;
	}

	.dock-strip button {
		display: block;
		width: 11px;
		height: 11px;
		background: #f0f0f0;
	}

	.dock-strip svg {
		display: block;
		fill: #e8d0d4;
		stroke: #333;
	}

	.rebar-main {
		display: flex;
		flex-direction: column;
		flex: 1;
		min-width: 0;
	}

	.rebar-tools {
		height: 26px;
	}

	.total {
		margin-left: 4px;
		white-space: nowrap;
	}

	.sheet {
		flex: 1;
		overflow: hidden;
		background: #fff;
		border: 1px solid #a0a0a0;
		border-bottom: 0;
	}

	table {
		width: 100%;
		table-layout: fixed;
		border-collapse: separate;
		border-spacing: 0;
		font-family: 'Noto Sans CJK SC', sans-serif;
		line-height: 12px;
	}

	th,
	td {
		height: 18px;
		padding: 0 0 0 2px;
		border: 0 solid #bdbdbd;
		border-width: 0 1px 1px 0;
		text-align: left;
		font-weight: 400;
		overflow: hidden;
	}

	th {
		padding: 0;
		text-align: center;
		white-space: nowrap;
		background: linear-gradient(#fff, #efefef);
	}

	th.hot {
		color: #5a005a;
		background: linear-gradient(#f8d9a0, #f3c164);
	}

	tbody th.hot {
		background: #ffd48c;
	}

	.data td {
		height: 28px;
		background: #ccffdb;
		word-break: break-all;
	}

	.data td.cell {
		background: #b5f0e0;
	}

	.data .weight {
		white-space: nowrap;
	}

	.sheet .name {
		padding-left: 1px;
		border-right-color: #000;
	}

	.sheet .grade {
		padding: 0;
		text-align: center;
	}

	.data .shape {
		padding: 0 27px 0 23px;
		text-align: center;
		color: #f00;
	}

	.shape .half {
		display: block;
		border-bottom: 2px solid #000;
	}

	.c21 { width: 21px; }
	.c33 { width: 33px; }
	.c34 { width: 34px; }
	.c36 { width: 36px; }
	.c38 { width: 38px; }
	.c39 { width: 39px; }
	.c49 { width: 49px; }
	.c56 { width: 56px; }
	.c61 { width: 61px; }
	.c73 { width: 73px; }
	.c121 { width: 121px; }
	.c156 { width: 156px; }
	.c166 { width: 166px; }
	.c201 { width: 201px; }

	/* inspector */
	.inspector {
		position: relative;
		display: flex;
		flex-direction: column;
		width: 402px;
		flex: none;
	}

	.inspector h2 {
		height: 15px;
		margin: 0 0 2px;
		box-sizing: border-box;
		border: 1px solid #888;
		font-size: 13px;
		line-height: 13px;
		font-weight: 400;
		white-space: nowrap;
	}

	.props {
		flex: 1;
		padding-left: 1px;
		background: #fff;
		border: 1px solid #a0a0a0;
		border-width: 1px 0 0 1px;
	}

	.props thead th {
		height: 22px;
	}

	.props td {
		white-space: nowrap;
	}

	.props .key {
		position: relative;
		padding-left: 19px;
	}

	.props .paren {
		padding-left: 4px;
	}

	.selected th {
		color: #5a005a;
		background: #ffd48c;
	}

	.selected .key {
		color: #fff;
		background: #3399ff;
	}

	.selected .val {
		background: #dfefff;
	}

	.blue .key {
		color: #00f;
	}

	.open .key,
	.closed .key {
		color: #888;
	}

	.fold {
		position: absolute;
		left: 2px;
		top: 3px;
		width: 13px;
		height: 13px;
		border: 1px solid #aaa;
		background: #f2f2f2;
	}

	.fold svg {
		display: block;
		stroke: #000;
	}

	.props .leaf .key {
		padding-left: 29px;
		background:
			linear-gradient(#bdbdbd, #bdbdbd) 8px 0 / 1px 100% no-repeat,
			linear-gradient(#bdbdbd, #bdbdbd) 8px 9px / 17px 1px no-repeat;
	}

	.props .last .key {
		background:
			linear-gradient(#bdbdbd, #bdbdbd) 8px 0 / 1px 9px no-repeat,
			linear-gradient(#bdbdbd, #bdbdbd) 8px 9px / 17px 1px no-repeat;
	}

	/* red review rings */
	.mark {
		position: absolute;
		fill: none;
		stroke: #f93a37;
		stroke-width: 3;
		pointer-events: none;
	}

	.mark.count {
		left: 809px;
		top: 35px;
		width: 56px;
		height: 92px;
	}

	.mark.kind {
		left: 121px;
		top: 63px;
		width: 162px;
		height: 58px;
	}

	/* floating system monitor */
	.monitor {
		position: absolute;
		right: 0;
		top: 0;
		width: 110px;
		height: 66px;
		overflow: hidden;
		color: #b4b8bc;
	}

	.ball {
		position: absolute;
		left: 27px;
		top: -32px;
		width: 44px;
		height: 44px;
		border: 2px solid #9edeb0;
		border-radius: 50%;
		background: #35c064;
		color: #fff;
		font-size: 14px;
		line-height: 58px;
		text-align: center;
	}

	.speed {
		position: absolute;
		right: 0;
		top: 0;
		width: 33px;
		font-size: 10px;
		color: #333;
		white-space: nowrap;
	}

	.speed span {
		margin-right: 11px;
		color: #2aa55a;
	}

	.temps {
		position: absolute;
		right: 0;
		top: 15px;
		width: 80px;
		height: 42px;
		padding: 5px 0 0 33px;
		box-sizing: border-box;
		background: #2b2c33;
		white-space: nowrap;
		overflow: hidden;
		font-size: 11px;
	}

	.deg {
		display: flex;
		align-items: center;
		gap: 6px;
		padding-left: 4px;
		color: #4de04d;
		font-size: 12px;
	}

	.deg svg {
		width: 10px;
		height: 14px;
		fill: #3fdc3f;
	}

	.dial {
		position: absolute;
		left: 3px;
		top: 9px;
		display: flex;
		align-items: baseline;
		justify-content: center;
		width: 48px;
		height: 48px;
		border: 2px solid #f0df10;
		border-radius: 50%;
		box-shadow: 0 0 0 3px #2b2c33;
		background: #2b2c33;
		color: #fff;
		font-size: 20px;
		line-height: 48px;
	}

	.dial small {
		font-size: 11px;
	}
</style>
